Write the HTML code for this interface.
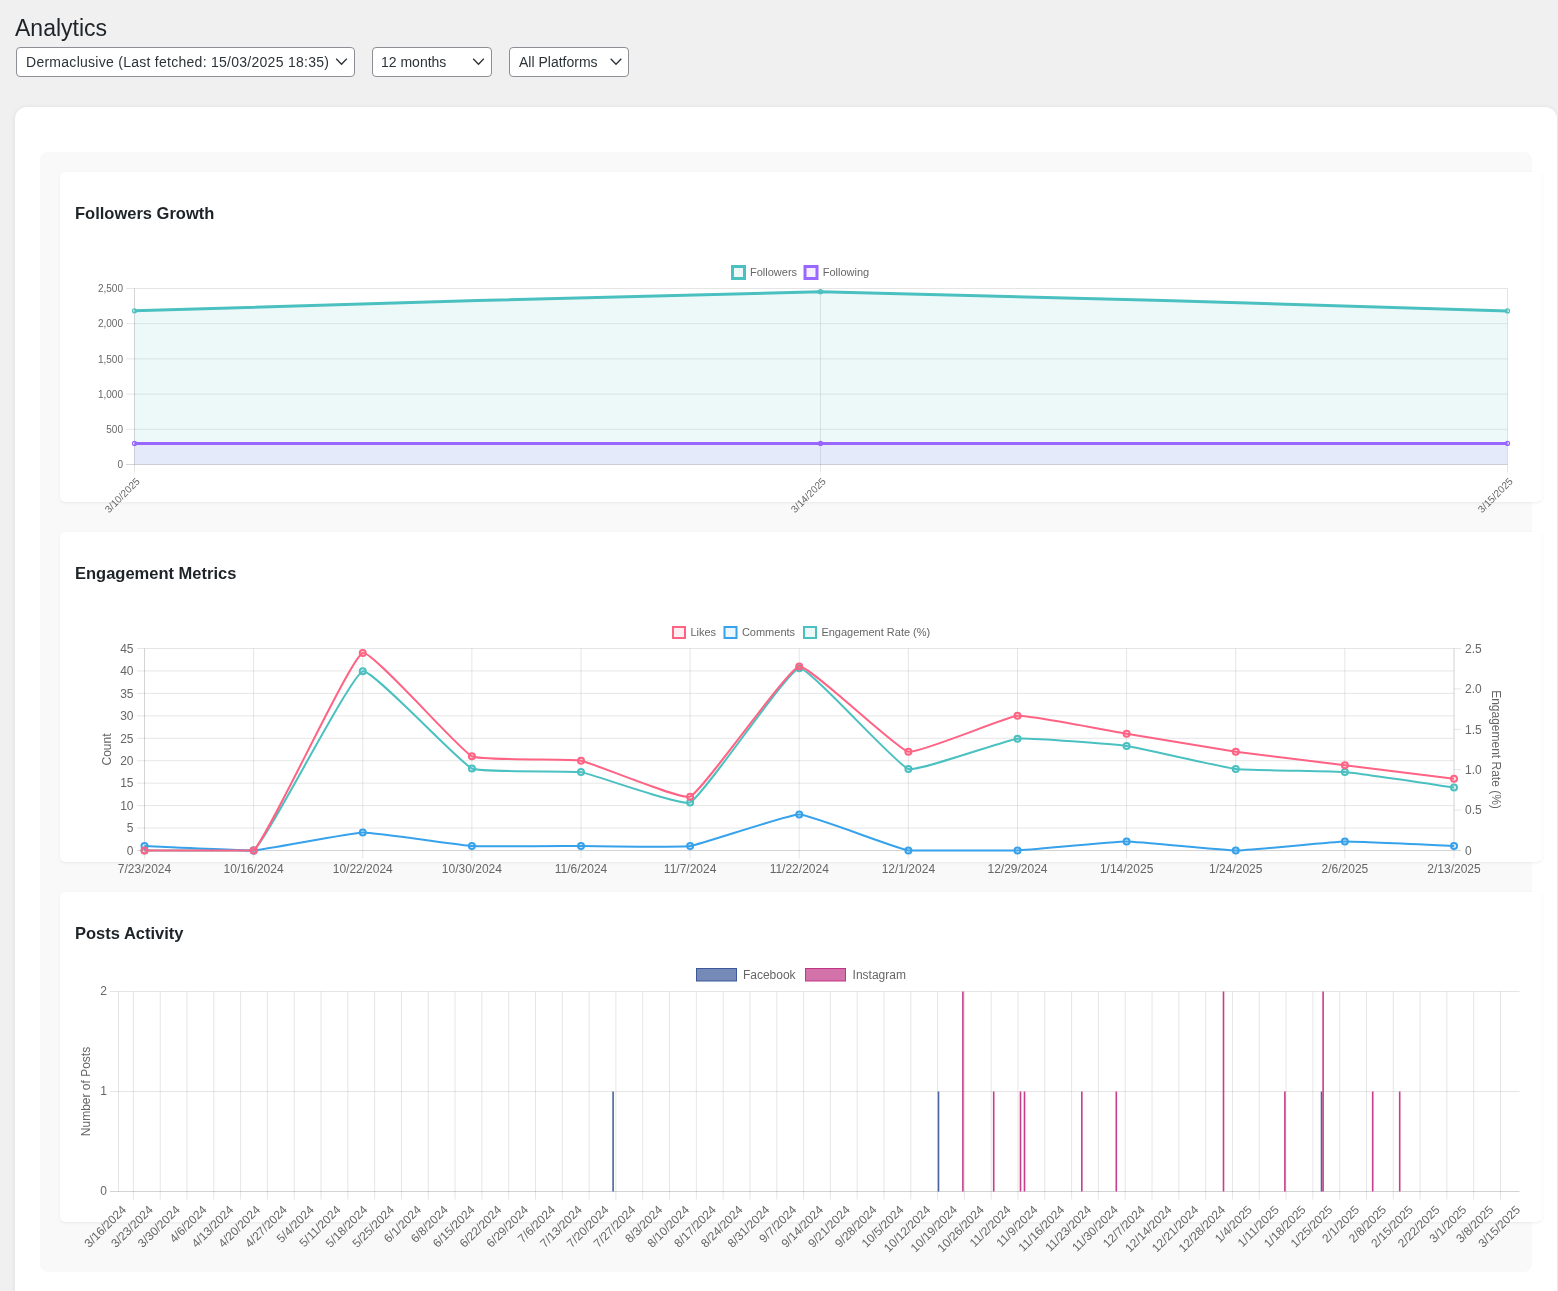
<!DOCTYPE html>
<html><head><meta charset="utf-8"><title>Analytics</title>
<style>
html,body{margin:0;padding:0;}
body{width:1558px;height:1291px;overflow:hidden;background:#f0f0f1;position:relative;font-family:'Liberation Sans', sans-serif;color:#1d2327;}
.abs{position:absolute;}
h1,.sel span,.ct{will-change:transform;}
h1{position:absolute;left:15px;top:13px;margin:0;font-size:23px;font-weight:400;line-height:30px;color:#1d2327;}
.sel{position:absolute;top:47px;height:28px;border:1px solid #8c8f94;border-radius:4px;background:#fff;box-sizing:content-box;font-size:14px;line-height:29px;color:#2c3338;white-space:nowrap;}
.outer{left:15px;top:107px;width:1542px;height:1300px;background:#fff;border-radius:12px;box-shadow:0 0 5px rgba(0,0,0,0.07);}
.panel{left:40px;top:152px;width:1492px;height:1120px;background:#f9f9f9;border-radius:8px;}
.card{left:60px;width:1482px;height:330px;background:#fff;border-radius:5px;box-shadow:0 1px 3px rgba(0,0,0,0.07);}
.ct{position:absolute;left:15px;top:29px;margin:0;font-size:16.5px;font-weight:700;line-height:24px;color:#1d2327;}
svg text{font-family:'Liberation Sans', sans-serif;}
body{-webkit-font-smoothing:antialiased;}
svg{will-change:transform;}
</style></head><body>
<h1>Analytics</h1>
<div class="sel" style="left:16px;width:337px;"><span style="position:absolute;left:8.5px;letter-spacing:0.27px;">Dermaclusive (Last fetched: 15/03/2025 18:35)</span></div>
<div class="sel" style="left:372px;width:118px;"><span style="position:absolute;left:8px;">12 months</span></div>
<div class="sel" style="left:509px;width:118px;"><span style="position:absolute;left:9px;">All Platforms</span></div>
<div class="abs outer"></div>
<div class="abs panel"></div>
<div class="abs card" style="top:172px;"><h2 class="ct">Followers Growth</h2></div>
<div class="abs card" style="top:532px;"><h2 class="ct">Engagement Metrics</h2></div>
<div class="abs card" style="top:892px;"><h2 class="ct">Posts Activity</h2></div>
<svg class="abs" style="left:0;top:0" width="1558" height="1291" viewBox="0 0 1558 1291">
<polyline points="336.2,58.8 341.5,64.3 346.8,58.8" fill="none" stroke="#2c3338" stroke-width="1.3"/><polyline points="473.2,58.8 478.5,64.3 483.8,58.8" fill="none" stroke="#2c3338" stroke-width="1.3"/><polyline points="610.7,58.8 616,64.3 621.3,58.8" fill="none" stroke="#2c3338" stroke-width="1.3"/>
<text x="820.5" y="276" font-size="11" text-anchor="start" fill="#666"></text><line x1="126" y1="464.5" x2="1507.5" y2="464.5" stroke="rgba(0,0,0,0.1)" stroke-width="1"/><text x="123" y="468.1" font-size="10" text-anchor="end" fill="#666">0</text><line x1="126" y1="429.3" x2="1507.5" y2="429.3" stroke="rgba(0,0,0,0.1)" stroke-width="1"/><text x="123" y="432.9" font-size="10" text-anchor="end" fill="#666">500</text><line x1="126" y1="394.1" x2="1507.5" y2="394.1" stroke="rgba(0,0,0,0.1)" stroke-width="1"/><text x="123" y="397.7" font-size="10" text-anchor="end" fill="#666">1,000</text><line x1="126" y1="358.9" x2="1507.5" y2="358.9" stroke="rgba(0,0,0,0.1)" stroke-width="1"/><text x="123" y="362.5" font-size="10" text-anchor="end" fill="#666">1,500</text><line x1="126" y1="323.7" x2="1507.5" y2="323.7" stroke="rgba(0,0,0,0.1)" stroke-width="1"/><text x="123" y="327.3" font-size="10" text-anchor="end" fill="#666">2,000</text><line x1="126" y1="288.5" x2="1507.5" y2="288.5" stroke="rgba(0,0,0,0.1)" stroke-width="1"/><text x="123" y="292.1" font-size="10" text-anchor="end" fill="#666">2,500</text><line x1="134.5" y1="288.5" x2="134.5" y2="472.5" stroke="rgba(0,0,0,0.1)" stroke-width="1"/><line x1="820.5" y1="288.5" x2="820.5" y2="472.5" stroke="rgba(0,0,0,0.1)" stroke-width="1"/><line x1="1507.5" y1="288.5" x2="1507.5" y2="472.5" stroke="rgba(0,0,0,0.1)" stroke-width="1"/><line x1="134.5" y1="288.5" x2="134.5" y2="464.5" stroke="rgba(0,0,0,0.08)" stroke-width="1"/><line x1="126" y1="464.5" x2="1507.5" y2="464.5" stroke="rgba(0,0,0,0.08)" stroke-width="1"/><path d="M134.5 443.4 C203.1 443.4 751.9 443.4 820.5 443.4 C889.2 443.4 1438.8 443.4 1507.5 443.4 L1507.5 464.5 L134.5 464.5 Z" fill="rgba(153,102,255,0.1)"/><path d="M134.5 310.8 C203.1 308.89 751.9 291.7 820.5 291.7 C889.2 291.71 1438.8 308.98 1507.5 310.9 L1507.5 464.5 L134.5 464.5 Z" fill="rgba(75,192,192,0.1)"/><path d="M134.5 443.4 C203.1 443.4 751.9 443.4 820.5 443.4 C889.2 443.4 1438.8 443.4 1507.5 443.4" fill="none" stroke="#9966ff" stroke-width="3"/><path d="M134.5 310.8 C203.1 308.89 751.9 291.7 820.5 291.7 C889.2 291.71 1438.8 308.98 1507.5 310.9" fill="none" stroke="#4bc0c0" stroke-width="3"/><circle cx="134.5" cy="443.4" r="2" fill="rgba(153,102,255,0.1)" stroke="#9966ff" stroke-width="1.2"/><circle cx="820.5" cy="443.4" r="2" fill="rgba(153,102,255,0.1)" stroke="#9966ff" stroke-width="1.2"/><circle cx="1507.5" cy="443.4" r="2" fill="rgba(153,102,255,0.1)" stroke="#9966ff" stroke-width="1.2"/><circle cx="134.5" cy="310.8" r="2" fill="rgba(75,192,192,0.1)" stroke="#4bc0c0" stroke-width="1.2"/><circle cx="820.5" cy="291.7" r="2" fill="rgba(75,192,192,0.1)" stroke="#4bc0c0" stroke-width="1.2"/><circle cx="1507.5" cy="310.9" r="2" fill="rgba(75,192,192,0.1)" stroke="#4bc0c0" stroke-width="1.2"/><rect x="732.5" y="266.5" width="12" height="12" fill="rgba(75,192,192,0.1)" stroke="#4bc0c0" stroke-width="3"/><text x="750" y="276" font-size="11" text-anchor="start" fill="#666">Followers</text><rect x="805" y="266.5" width="12" height="12" fill="rgba(153,102,255,0.1)" stroke="#9966ff" stroke-width="3"/><text x="822.7" y="276" font-size="11" text-anchor="start" fill="#666">Following</text><text x="140.5" y="482" font-size="10" text-anchor="end" fill="#666" transform="rotate(-45 140.5 482)">3/10/2025</text><text x="826.5" y="482" font-size="10" text-anchor="end" fill="#666" transform="rotate(-45 826.5 482)">3/14/2025</text><text x="1513.5" y="482" font-size="10" text-anchor="end" fill="#666" transform="rotate(-45 1513.5 482)">3/15/2025</text><line x1="137" y1="850.5" x2="1454" y2="850.5" stroke="rgba(0,0,0,0.1)" stroke-width="1"/><text x="133.5" y="854.8" font-size="12" text-anchor="end" fill="#666">0</text><line x1="137" y1="828.06" x2="1454" y2="828.06" stroke="rgba(0,0,0,0.1)" stroke-width="1"/><text x="133.5" y="832.36" font-size="12" text-anchor="end" fill="#666">5</text><line x1="137" y1="805.61" x2="1454" y2="805.61" stroke="rgba(0,0,0,0.1)" stroke-width="1"/><text x="133.5" y="809.91" font-size="12" text-anchor="end" fill="#666">10</text><line x1="137" y1="783.17" x2="1454" y2="783.17" stroke="rgba(0,0,0,0.1)" stroke-width="1"/><text x="133.5" y="787.47" font-size="12" text-anchor="end" fill="#666">15</text><line x1="137" y1="760.72" x2="1454" y2="760.72" stroke="rgba(0,0,0,0.1)" stroke-width="1"/><text x="133.5" y="765.02" font-size="12" text-anchor="end" fill="#666">20</text><line x1="137" y1="738.28" x2="1454" y2="738.28" stroke="rgba(0,0,0,0.1)" stroke-width="1"/><text x="133.5" y="742.58" font-size="12" text-anchor="end" fill="#666">25</text><line x1="137" y1="715.83" x2="1454" y2="715.83" stroke="rgba(0,0,0,0.1)" stroke-width="1"/><text x="133.5" y="720.13" font-size="12" text-anchor="end" fill="#666">30</text><line x1="137" y1="693.39" x2="1454" y2="693.39" stroke="rgba(0,0,0,0.1)" stroke-width="1"/><text x="133.5" y="697.69" font-size="12" text-anchor="end" fill="#666">35</text><line x1="137" y1="670.94" x2="1454" y2="670.94" stroke="rgba(0,0,0,0.1)" stroke-width="1"/><text x="133.5" y="675.24" font-size="12" text-anchor="end" fill="#666">40</text><line x1="137" y1="648.5" x2="1454" y2="648.5" stroke="rgba(0,0,0,0.1)" stroke-width="1"/><text x="133.5" y="652.8" font-size="12" text-anchor="end" fill="#666">45</text><line x1="1454" y1="850.5" x2="1461" y2="850.5" stroke="rgba(0,0,0,0.1)" stroke-width="1"/><text x="1465" y="854.8" font-size="12" text-anchor="start" fill="#666">0</text><line x1="1454" y1="810.1" x2="1461" y2="810.1" stroke="rgba(0,0,0,0.1)" stroke-width="1"/><text x="1465" y="814.4" font-size="12" text-anchor="start" fill="#666">0.5</text><line x1="1454" y1="769.7" x2="1461" y2="769.7" stroke="rgba(0,0,0,0.1)" stroke-width="1"/><text x="1465" y="774" font-size="12" text-anchor="start" fill="#666">1.0</text><line x1="1454" y1="729.3" x2="1461" y2="729.3" stroke="rgba(0,0,0,0.1)" stroke-width="1"/><text x="1465" y="733.6" font-size="12" text-anchor="start" fill="#666">1.5</text><line x1="1454" y1="688.9" x2="1461" y2="688.9" stroke="rgba(0,0,0,0.1)" stroke-width="1"/><text x="1465" y="693.2" font-size="12" text-anchor="start" fill="#666">2.0</text><line x1="1454" y1="648.5" x2="1461" y2="648.5" stroke="rgba(0,0,0,0.1)" stroke-width="1"/><text x="1465" y="652.8" font-size="12" text-anchor="start" fill="#666">2.5</text><line x1="144.5" y1="648.5" x2="144.5" y2="858.5" stroke="rgba(0,0,0,0.1)" stroke-width="1"/><text x="144.5" y="873" font-size="12" text-anchor="middle" fill="#666">7/23/2024</text><line x1="253.62" y1="648.5" x2="253.62" y2="858.5" stroke="rgba(0,0,0,0.1)" stroke-width="1"/><text x="253.62" y="873" font-size="12" text-anchor="middle" fill="#666">10/16/2024</text><line x1="362.75" y1="648.5" x2="362.75" y2="858.5" stroke="rgba(0,0,0,0.1)" stroke-width="1"/><text x="362.75" y="873" font-size="12" text-anchor="middle" fill="#666">10/22/2024</text><line x1="471.88" y1="648.5" x2="471.88" y2="858.5" stroke="rgba(0,0,0,0.1)" stroke-width="1"/><text x="471.88" y="873" font-size="12" text-anchor="middle" fill="#666">10/30/2024</text><line x1="581" y1="648.5" x2="581" y2="858.5" stroke="rgba(0,0,0,0.1)" stroke-width="1"/><text x="581" y="873" font-size="12" text-anchor="middle" fill="#666">11/6/2024</text><line x1="690.12" y1="648.5" x2="690.12" y2="858.5" stroke="rgba(0,0,0,0.1)" stroke-width="1"/><text x="690.12" y="873" font-size="12" text-anchor="middle" fill="#666">11/7/2024</text><line x1="799.25" y1="648.5" x2="799.25" y2="858.5" stroke="rgba(0,0,0,0.1)" stroke-width="1"/><text x="799.25" y="873" font-size="12" text-anchor="middle" fill="#666">11/22/2024</text><line x1="908.38" y1="648.5" x2="908.38" y2="858.5" stroke="rgba(0,0,0,0.1)" stroke-width="1"/><text x="908.38" y="873" font-size="12" text-anchor="middle" fill="#666">12/1/2024</text><line x1="1017.5" y1="648.5" x2="1017.5" y2="858.5" stroke="rgba(0,0,0,0.1)" stroke-width="1"/><text x="1017.5" y="873" font-size="12" text-anchor="middle" fill="#666">12/29/2024</text><line x1="1126.62" y1="648.5" x2="1126.62" y2="858.5" stroke="rgba(0,0,0,0.1)" stroke-width="1"/><text x="1126.62" y="873" font-size="12" text-anchor="middle" fill="#666">1/14/2025</text><line x1="1235.75" y1="648.5" x2="1235.75" y2="858.5" stroke="rgba(0,0,0,0.1)" stroke-width="1"/><text x="1235.75" y="873" font-size="12" text-anchor="middle" fill="#666">1/24/2025</text><line x1="1344.88" y1="648.5" x2="1344.88" y2="858.5" stroke="rgba(0,0,0,0.1)" stroke-width="1"/><text x="1344.88" y="873" font-size="12" text-anchor="middle" fill="#666">2/6/2025</text><line x1="1454" y1="648.5" x2="1454" y2="858.5" stroke="rgba(0,0,0,0.1)" stroke-width="1"/><text x="1454" y="873" font-size="12" text-anchor="middle" fill="#666">2/13/2025</text><line x1="144.5" y1="648.5" x2="144.5" y2="850.5" stroke="rgba(0,0,0,0.08)" stroke-width="1"/><line x1="1454" y1="648.5" x2="1454" y2="850.5" stroke="rgba(0,0,0,0.08)" stroke-width="1"/><line x1="137" y1="850.5" x2="1461" y2="850.5" stroke="rgba(0,0,0,0.08)" stroke-width="1"/><path d="M144.5 850.5 C155.41 850.5 246.16 850.5 253.62 850.5 C267.98 838.72 349.88 676.2 362.75 671.37 C371.71 668 459.39 762.72 471.88 768.49 C481.21 772.8 570.29 770.46 581 772.12 C592.11 773.85 681.49 806.53 690.12 802.42 C703.31 796.15 787.51 670.1 799.25 668.3 C809.33 666.75 895.99 764.98 908.38 768.97 C917.82 772.02 1006.4 739.84 1017.5 738.67 C1028.22 737.54 1115.82 744.44 1126.62 745.94 C1137.64 747.47 1224.72 767.65 1235.75 768.97 C1246.55 770.27 1334.01 771.2 1344.88 772.12 C1355.84 773.05 1443.09 785.94 1454 787.48" fill="none" stroke="#4bc0c0" stroke-width="2"/><circle cx="144.5" cy="850.5" r="3" fill="rgba(75,192,192,0.1)" stroke="#4bc0c0" stroke-width="2"/><circle cx="253.62" cy="850.5" r="3" fill="rgba(75,192,192,0.1)" stroke="#4bc0c0" stroke-width="2"/><circle cx="362.75" cy="671.37" r="3" fill="rgba(75,192,192,0.1)" stroke="#4bc0c0" stroke-width="2"/><circle cx="471.88" cy="768.49" r="3" fill="rgba(75,192,192,0.1)" stroke="#4bc0c0" stroke-width="2"/><circle cx="581" cy="772.12" r="3" fill="rgba(75,192,192,0.1)" stroke="#4bc0c0" stroke-width="2"/><circle cx="690.12" cy="802.42" r="3" fill="rgba(75,192,192,0.1)" stroke="#4bc0c0" stroke-width="2"/><circle cx="799.25" cy="668.3" r="3" fill="rgba(75,192,192,0.1)" stroke="#4bc0c0" stroke-width="2"/><circle cx="908.38" cy="768.97" r="3" fill="rgba(75,192,192,0.1)" stroke="#4bc0c0" stroke-width="2"/><circle cx="1017.5" cy="738.67" r="3" fill="rgba(75,192,192,0.1)" stroke="#4bc0c0" stroke-width="2"/><circle cx="1126.62" cy="745.94" r="3" fill="rgba(75,192,192,0.1)" stroke="#4bc0c0" stroke-width="2"/><circle cx="1235.75" cy="768.97" r="3" fill="rgba(75,192,192,0.1)" stroke="#4bc0c0" stroke-width="2"/><circle cx="1344.88" cy="772.12" r="3" fill="rgba(75,192,192,0.1)" stroke="#4bc0c0" stroke-width="2"/><circle cx="1454" cy="787.48" r="3" fill="rgba(75,192,192,0.1)" stroke="#4bc0c0" stroke-width="2"/><path d="M144.5 846.01 C155.41 846.46 242.78 850.5 253.62 850.5 C264.61 849.82 351.81 832.77 362.75 832.54 C373.63 832.32 460.92 845.34 471.88 846.01 C482.75 846.68 570.09 846.01 581 846.01 C591.91 846.01 679.43 847.55 690.12 846.01 C701.25 844.41 788.4 814.37 799.25 814.59 C810.23 814.81 897.18 848.66 908.38 850.5 C919.01 850.5 1006.61 850.5 1017.5 850.5 C1028.43 850.05 1115.71 841.52 1126.62 841.52 C1137.54 841.52 1224.84 850.5 1235.75 850.5 C1246.66 850.5 1333.95 841.75 1344.88 841.52 C1355.77 841.3 1443.09 845.56 1454 846.01" fill="none" stroke="#36a2eb" stroke-width="2"/><circle cx="144.5" cy="846.01" r="3" fill="rgba(54,162,235,0.1)" stroke="#36a2eb" stroke-width="2"/><circle cx="253.62" cy="850.5" r="3" fill="rgba(54,162,235,0.1)" stroke="#36a2eb" stroke-width="2"/><circle cx="362.75" cy="832.54" r="3" fill="rgba(54,162,235,0.1)" stroke="#36a2eb" stroke-width="2"/><circle cx="471.88" cy="846.01" r="3" fill="rgba(54,162,235,0.1)" stroke="#36a2eb" stroke-width="2"/><circle cx="581" cy="846.01" r="3" fill="rgba(54,162,235,0.1)" stroke="#36a2eb" stroke-width="2"/><circle cx="690.12" cy="846.01" r="3" fill="rgba(54,162,235,0.1)" stroke="#36a2eb" stroke-width="2"/><circle cx="799.25" cy="814.59" r="3" fill="rgba(54,162,235,0.1)" stroke="#36a2eb" stroke-width="2"/><circle cx="908.38" cy="850.5" r="3" fill="rgba(54,162,235,0.1)" stroke="#36a2eb" stroke-width="2"/><circle cx="1017.5" cy="850.5" r="3" fill="rgba(54,162,235,0.1)" stroke="#36a2eb" stroke-width="2"/><circle cx="1126.62" cy="841.52" r="3" fill="rgba(54,162,235,0.1)" stroke="#36a2eb" stroke-width="2"/><circle cx="1235.75" cy="850.5" r="3" fill="rgba(54,162,235,0.1)" stroke="#36a2eb" stroke-width="2"/><circle cx="1344.88" cy="841.52" r="3" fill="rgba(54,162,235,0.1)" stroke="#36a2eb" stroke-width="2"/><circle cx="1454" cy="846.01" r="3" fill="rgba(54,162,235,0.1)" stroke="#36a2eb" stroke-width="2"/><path d="M144.5 850.5 C155.41 850.5 246.51 850.5 253.62 850.5 C268.34 837.19 349.65 658.65 362.75 652.99 C371.47 649.22 459.24 750 471.88 756.23 C481.06 760.77 570.36 758.75 581 760.72 C592.19 762.79 681.32 800.44 690.12 796.63 C703.14 791.01 787.23 668.93 799.25 666.46 C809.05 664.44 896.45 749.05 908.38 751.74 C918.27 753.98 1006.38 716.75 1017.5 715.83 C1028.2 714.95 1115.71 731.99 1126.62 733.79 C1137.54 735.58 1224.81 750.17 1235.75 751.74 C1246.63 753.31 1333.96 763.86 1344.88 765.21 C1355.79 766.56 1443.09 777.33 1454 778.68" fill="none" stroke="#ff6384" stroke-width="2"/><circle cx="144.5" cy="850.5" r="3" fill="rgba(255,99,132,0.1)" stroke="#ff6384" stroke-width="2"/><circle cx="253.62" cy="850.5" r="3" fill="rgba(255,99,132,0.1)" stroke="#ff6384" stroke-width="2"/><circle cx="362.75" cy="652.99" r="3" fill="rgba(255,99,132,0.1)" stroke="#ff6384" stroke-width="2"/><circle cx="471.88" cy="756.23" r="3" fill="rgba(255,99,132,0.1)" stroke="#ff6384" stroke-width="2"/><circle cx="581" cy="760.72" r="3" fill="rgba(255,99,132,0.1)" stroke="#ff6384" stroke-width="2"/><circle cx="690.12" cy="796.63" r="3" fill="rgba(255,99,132,0.1)" stroke="#ff6384" stroke-width="2"/><circle cx="799.25" cy="666.46" r="3" fill="rgba(255,99,132,0.1)" stroke="#ff6384" stroke-width="2"/><circle cx="908.38" cy="751.74" r="3" fill="rgba(255,99,132,0.1)" stroke="#ff6384" stroke-width="2"/><circle cx="1017.5" cy="715.83" r="3" fill="rgba(255,99,132,0.1)" stroke="#ff6384" stroke-width="2"/><circle cx="1126.62" cy="733.79" r="3" fill="rgba(255,99,132,0.1)" stroke="#ff6384" stroke-width="2"/><circle cx="1235.75" cy="751.74" r="3" fill="rgba(255,99,132,0.1)" stroke="#ff6384" stroke-width="2"/><circle cx="1344.88" cy="765.21" r="3" fill="rgba(255,99,132,0.1)" stroke="#ff6384" stroke-width="2"/><circle cx="1454" cy="778.68" r="3" fill="rgba(255,99,132,0.1)" stroke="#ff6384" stroke-width="2"/><text x="110.5" y="749.5" font-size="12" text-anchor="middle" fill="#666" transform="rotate(-90 110.5 749.5)">Count</text><text x="1491.5" y="749.5" font-size="12" text-anchor="middle" fill="#666" transform="rotate(90 1491.5 749.5)">Engagement Rate (%)</text><rect x="673" y="627" width="12" height="11" fill="rgba(255,99,132,0.1)" stroke="#ff6384" stroke-width="2"/><text x="690.4" y="636" font-size="11" text-anchor="start" fill="#666">Likes</text><rect x="724.5" y="627" width="12" height="11" fill="rgba(54,162,235,0.1)" stroke="#36a2eb" stroke-width="2"/><text x="741.9" y="636" font-size="11" text-anchor="start" fill="#666">Comments</text><rect x="804" y="627" width="12" height="11" fill="rgba(75,192,192,0.1)" stroke="#4bc0c0" stroke-width="2"/><text x="821.4" y="636" font-size="11" text-anchor="start" fill="#666">Engagement Rate (%)</text><line x1="110" y1="991.5" x2="1519.5" y2="991.5" stroke="rgba(0,0,0,0.1)" stroke-width="1"/><text x="107" y="994.8" font-size="12" text-anchor="end" fill="#666">2</text><line x1="110" y1="1091.5" x2="1519.5" y2="1091.5" stroke="rgba(0,0,0,0.1)" stroke-width="1"/><text x="107" y="1094.8" font-size="12" text-anchor="end" fill="#666">1</text><line x1="110" y1="1191.5" x2="1519.5" y2="1191.5" stroke="rgba(0,0,0,0.1)" stroke-width="1"/><text x="107" y="1194.8" font-size="12" text-anchor="end" fill="#666">0</text><line x1="118.5" y1="991.5" x2="118.5" y2="1191.5" stroke="rgba(0,0,0,0.1)" stroke-width="1"/><line x1="110" y1="1191.5" x2="1519.5" y2="1191.5" stroke="rgba(0,0,0,0.08)" stroke-width="1"/><line x1="133.4" y1="991.5" x2="133.4" y2="1199.5" stroke="rgba(0,0,0,0.1)" stroke-width="1"/><line x1="160.21" y1="991.5" x2="160.21" y2="1199.5" stroke="rgba(0,0,0,0.1)" stroke-width="1"/><line x1="187.01" y1="991.5" x2="187.01" y2="1199.5" stroke="rgba(0,0,0,0.1)" stroke-width="1"/><line x1="213.82" y1="991.5" x2="213.82" y2="1199.5" stroke="rgba(0,0,0,0.1)" stroke-width="1"/><line x1="240.62" y1="991.5" x2="240.62" y2="1199.5" stroke="rgba(0,0,0,0.1)" stroke-width="1"/><line x1="267.43" y1="991.5" x2="267.43" y2="1199.5" stroke="rgba(0,0,0,0.1)" stroke-width="1"/><line x1="294.24" y1="991.5" x2="294.24" y2="1199.5" stroke="rgba(0,0,0,0.1)" stroke-width="1"/><line x1="321.04" y1="991.5" x2="321.04" y2="1199.5" stroke="rgba(0,0,0,0.1)" stroke-width="1"/><line x1="347.85" y1="991.5" x2="347.85" y2="1199.5" stroke="rgba(0,0,0,0.1)" stroke-width="1"/><line x1="374.65" y1="991.5" x2="374.65" y2="1199.5" stroke="rgba(0,0,0,0.1)" stroke-width="1"/><line x1="401.46" y1="991.5" x2="401.46" y2="1199.5" stroke="rgba(0,0,0,0.1)" stroke-width="1"/><line x1="428.27" y1="991.5" x2="428.27" y2="1199.5" stroke="rgba(0,0,0,0.1)" stroke-width="1"/><line x1="455.07" y1="991.5" x2="455.07" y2="1199.5" stroke="rgba(0,0,0,0.1)" stroke-width="1"/><line x1="481.88" y1="991.5" x2="481.88" y2="1199.5" stroke="rgba(0,0,0,0.1)" stroke-width="1"/><line x1="508.68" y1="991.5" x2="508.68" y2="1199.5" stroke="rgba(0,0,0,0.1)" stroke-width="1"/><line x1="535.49" y1="991.5" x2="535.49" y2="1199.5" stroke="rgba(0,0,0,0.1)" stroke-width="1"/><line x1="562.3" y1="991.5" x2="562.3" y2="1199.5" stroke="rgba(0,0,0,0.1)" stroke-width="1"/><line x1="589.1" y1="991.5" x2="589.1" y2="1199.5" stroke="rgba(0,0,0,0.1)" stroke-width="1"/><line x1="615.91" y1="991.5" x2="615.91" y2="1199.5" stroke="rgba(0,0,0,0.1)" stroke-width="1"/><line x1="642.71" y1="991.5" x2="642.71" y2="1199.5" stroke="rgba(0,0,0,0.1)" stroke-width="1"/><line x1="669.52" y1="991.5" x2="669.52" y2="1199.5" stroke="rgba(0,0,0,0.1)" stroke-width="1"/><line x1="696.33" y1="991.5" x2="696.33" y2="1199.5" stroke="rgba(0,0,0,0.1)" stroke-width="1"/><line x1="723.13" y1="991.5" x2="723.13" y2="1199.5" stroke="rgba(0,0,0,0.1)" stroke-width="1"/><line x1="749.94" y1="991.5" x2="749.94" y2="1199.5" stroke="rgba(0,0,0,0.1)" stroke-width="1"/><line x1="776.74" y1="991.5" x2="776.74" y2="1199.5" stroke="rgba(0,0,0,0.1)" stroke-width="1"/><line x1="803.55" y1="991.5" x2="803.55" y2="1199.5" stroke="rgba(0,0,0,0.1)" stroke-width="1"/><line x1="830.36" y1="991.5" x2="830.36" y2="1199.5" stroke="rgba(0,0,0,0.1)" stroke-width="1"/><line x1="857.16" y1="991.5" x2="857.16" y2="1199.5" stroke="rgba(0,0,0,0.1)" stroke-width="1"/><line x1="883.97" y1="991.5" x2="883.97" y2="1199.5" stroke="rgba(0,0,0,0.1)" stroke-width="1"/><line x1="910.77" y1="991.5" x2="910.77" y2="1199.5" stroke="rgba(0,0,0,0.1)" stroke-width="1"/><line x1="937.58" y1="991.5" x2="937.58" y2="1199.5" stroke="rgba(0,0,0,0.1)" stroke-width="1"/><line x1="964.39" y1="991.5" x2="964.39" y2="1199.5" stroke="rgba(0,0,0,0.1)" stroke-width="1"/><line x1="991.19" y1="991.5" x2="991.19" y2="1199.5" stroke="rgba(0,0,0,0.1)" stroke-width="1"/><line x1="1018" y1="991.5" x2="1018" y2="1199.5" stroke="rgba(0,0,0,0.1)" stroke-width="1"/><line x1="1044.8" y1="991.5" x2="1044.8" y2="1199.5" stroke="rgba(0,0,0,0.1)" stroke-width="1"/><line x1="1071.61" y1="991.5" x2="1071.61" y2="1199.5" stroke="rgba(0,0,0,0.1)" stroke-width="1"/><line x1="1098.42" y1="991.5" x2="1098.42" y2="1199.5" stroke="rgba(0,0,0,0.1)" stroke-width="1"/><line x1="1125.22" y1="991.5" x2="1125.22" y2="1199.5" stroke="rgba(0,0,0,0.1)" stroke-width="1"/><line x1="1152.03" y1="991.5" x2="1152.03" y2="1199.5" stroke="rgba(0,0,0,0.1)" stroke-width="1"/><line x1="1178.83" y1="991.5" x2="1178.83" y2="1199.5" stroke="rgba(0,0,0,0.1)" stroke-width="1"/><line x1="1205.64" y1="991.5" x2="1205.64" y2="1199.5" stroke="rgba(0,0,0,0.1)" stroke-width="1"/><line x1="1232.45" y1="991.5" x2="1232.45" y2="1199.5" stroke="rgba(0,0,0,0.1)" stroke-width="1"/><line x1="1259.25" y1="991.5" x2="1259.25" y2="1199.5" stroke="rgba(0,0,0,0.1)" stroke-width="1"/><line x1="1286.06" y1="991.5" x2="1286.06" y2="1199.5" stroke="rgba(0,0,0,0.1)" stroke-width="1"/><line x1="1312.86" y1="991.5" x2="1312.86" y2="1199.5" stroke="rgba(0,0,0,0.1)" stroke-width="1"/><line x1="1339.67" y1="991.5" x2="1339.67" y2="1199.5" stroke="rgba(0,0,0,0.1)" stroke-width="1"/><line x1="1366.48" y1="991.5" x2="1366.48" y2="1199.5" stroke="rgba(0,0,0,0.1)" stroke-width="1"/><line x1="1393.28" y1="991.5" x2="1393.28" y2="1199.5" stroke="rgba(0,0,0,0.1)" stroke-width="1"/><line x1="1420.09" y1="991.5" x2="1420.09" y2="1199.5" stroke="rgba(0,0,0,0.1)" stroke-width="1"/><line x1="1446.89" y1="991.5" x2="1446.89" y2="1199.5" stroke="rgba(0,0,0,0.1)" stroke-width="1"/><line x1="1473.7" y1="991.5" x2="1473.7" y2="1199.5" stroke="rgba(0,0,0,0.1)" stroke-width="1"/><line x1="1500.51" y1="991.5" x2="1500.51" y2="1199.5" stroke="rgba(0,0,0,0.1)" stroke-width="1"/><text x="127" y="1210.5" font-size="12" text-anchor="end" fill="#666" transform="rotate(-45 127 1210.5)">3/16/2024</text><text x="153.81" y="1210.5" font-size="12" text-anchor="end" fill="#666" transform="rotate(-45 153.81 1210.5)">3/23/2024</text><text x="180.61" y="1210.5" font-size="12" text-anchor="end" fill="#666" transform="rotate(-45 180.61 1210.5)">3/30/2024</text><text x="207.42" y="1210.5" font-size="12" text-anchor="end" fill="#666" transform="rotate(-45 207.42 1210.5)">4/6/2024</text><text x="234.22" y="1210.5" font-size="12" text-anchor="end" fill="#666" transform="rotate(-45 234.22 1210.5)">4/13/2024</text><text x="261.03" y="1210.5" font-size="12" text-anchor="end" fill="#666" transform="rotate(-45 261.03 1210.5)">4/20/2024</text><text x="287.84" y="1210.5" font-size="12" text-anchor="end" fill="#666" transform="rotate(-45 287.84 1210.5)">4/27/2024</text><text x="314.64" y="1210.5" font-size="12" text-anchor="end" fill="#666" transform="rotate(-45 314.64 1210.5)">5/4/2024</text><text x="341.45" y="1210.5" font-size="12" text-anchor="end" fill="#666" transform="rotate(-45 341.45 1210.5)">5/11/2024</text><text x="368.25" y="1210.5" font-size="12" text-anchor="end" fill="#666" transform="rotate(-45 368.25 1210.5)">5/18/2024</text><text x="395.06" y="1210.5" font-size="12" text-anchor="end" fill="#666" transform="rotate(-45 395.06 1210.5)">5/25/2024</text><text x="421.87" y="1210.5" font-size="12" text-anchor="end" fill="#666" transform="rotate(-45 421.87 1210.5)">6/1/2024</text><text x="448.67" y="1210.5" font-size="12" text-anchor="end" fill="#666" transform="rotate(-45 448.67 1210.5)">6/8/2024</text><text x="475.48" y="1210.5" font-size="12" text-anchor="end" fill="#666" transform="rotate(-45 475.48 1210.5)">6/15/2024</text><text x="502.28" y="1210.5" font-size="12" text-anchor="end" fill="#666" transform="rotate(-45 502.28 1210.5)">6/22/2024</text><text x="529.09" y="1210.5" font-size="12" text-anchor="end" fill="#666" transform="rotate(-45 529.09 1210.5)">6/29/2024</text><text x="555.9" y="1210.5" font-size="12" text-anchor="end" fill="#666" transform="rotate(-45 555.9 1210.5)">7/6/2024</text><text x="582.7" y="1210.5" font-size="12" text-anchor="end" fill="#666" transform="rotate(-45 582.7 1210.5)">7/13/2024</text><text x="609.51" y="1210.5" font-size="12" text-anchor="end" fill="#666" transform="rotate(-45 609.51 1210.5)">7/20/2024</text><text x="636.31" y="1210.5" font-size="12" text-anchor="end" fill="#666" transform="rotate(-45 636.31 1210.5)">7/27/2024</text><text x="663.12" y="1210.5" font-size="12" text-anchor="end" fill="#666" transform="rotate(-45 663.12 1210.5)">8/3/2024</text><text x="689.93" y="1210.5" font-size="12" text-anchor="end" fill="#666" transform="rotate(-45 689.93 1210.5)">8/10/2024</text><text x="716.73" y="1210.5" font-size="12" text-anchor="end" fill="#666" transform="rotate(-45 716.73 1210.5)">8/17/2024</text><text x="743.54" y="1210.5" font-size="12" text-anchor="end" fill="#666" transform="rotate(-45 743.54 1210.5)">8/24/2024</text><text x="770.34" y="1210.5" font-size="12" text-anchor="end" fill="#666" transform="rotate(-45 770.34 1210.5)">8/31/2024</text><text x="797.15" y="1210.5" font-size="12" text-anchor="end" fill="#666" transform="rotate(-45 797.15 1210.5)">9/7/2024</text><text x="823.96" y="1210.5" font-size="12" text-anchor="end" fill="#666" transform="rotate(-45 823.96 1210.5)">9/14/2024</text><text x="850.76" y="1210.5" font-size="12" text-anchor="end" fill="#666" transform="rotate(-45 850.76 1210.5)">9/21/2024</text><text x="877.57" y="1210.5" font-size="12" text-anchor="end" fill="#666" transform="rotate(-45 877.57 1210.5)">9/28/2024</text><text x="904.37" y="1210.5" font-size="12" text-anchor="end" fill="#666" transform="rotate(-45 904.37 1210.5)">10/5/2024</text><text x="931.18" y="1210.5" font-size="12" text-anchor="end" fill="#666" transform="rotate(-45 931.18 1210.5)">10/12/2024</text><text x="957.99" y="1210.5" font-size="12" text-anchor="end" fill="#666" transform="rotate(-45 957.99 1210.5)">10/19/2024</text><text x="984.79" y="1210.5" font-size="12" text-anchor="end" fill="#666" transform="rotate(-45 984.79 1210.5)">10/26/2024</text><text x="1011.6" y="1210.5" font-size="12" text-anchor="end" fill="#666" transform="rotate(-45 1011.6 1210.5)">11/2/2024</text><text x="1038.4" y="1210.5" font-size="12" text-anchor="end" fill="#666" transform="rotate(-45 1038.4 1210.5)">11/9/2024</text><text x="1065.21" y="1210.5" font-size="12" text-anchor="end" fill="#666" transform="rotate(-45 1065.21 1210.5)">11/16/2024</text><text x="1092.02" y="1210.5" font-size="12" text-anchor="end" fill="#666" transform="rotate(-45 1092.02 1210.5)">11/23/2024</text><text x="1118.82" y="1210.5" font-size="12" text-anchor="end" fill="#666" transform="rotate(-45 1118.82 1210.5)">11/30/2024</text><text x="1145.63" y="1210.5" font-size="12" text-anchor="end" fill="#666" transform="rotate(-45 1145.63 1210.5)">12/7/2024</text><text x="1172.43" y="1210.5" font-size="12" text-anchor="end" fill="#666" transform="rotate(-45 1172.43 1210.5)">12/14/2024</text><text x="1199.24" y="1210.5" font-size="12" text-anchor="end" fill="#666" transform="rotate(-45 1199.24 1210.5)">12/21/2024</text><text x="1226.05" y="1210.5" font-size="12" text-anchor="end" fill="#666" transform="rotate(-45 1226.05 1210.5)">12/28/2024</text><text x="1252.85" y="1210.5" font-size="12" text-anchor="end" fill="#666" transform="rotate(-45 1252.85 1210.5)">1/4/2025</text><text x="1279.66" y="1210.5" font-size="12" text-anchor="end" fill="#666" transform="rotate(-45 1279.66 1210.5)">1/11/2025</text><text x="1306.46" y="1210.5" font-size="12" text-anchor="end" fill="#666" transform="rotate(-45 1306.46 1210.5)">1/18/2025</text><text x="1333.27" y="1210.5" font-size="12" text-anchor="end" fill="#666" transform="rotate(-45 1333.27 1210.5)">1/25/2025</text><text x="1360.08" y="1210.5" font-size="12" text-anchor="end" fill="#666" transform="rotate(-45 1360.08 1210.5)">2/1/2025</text><text x="1386.88" y="1210.5" font-size="12" text-anchor="end" fill="#666" transform="rotate(-45 1386.88 1210.5)">2/8/2025</text><text x="1413.69" y="1210.5" font-size="12" text-anchor="end" fill="#666" transform="rotate(-45 1413.69 1210.5)">2/15/2025</text><text x="1440.49" y="1210.5" font-size="12" text-anchor="end" fill="#666" transform="rotate(-45 1440.49 1210.5)">2/22/2025</text><text x="1467.3" y="1210.5" font-size="12" text-anchor="end" fill="#666" transform="rotate(-45 1467.3 1210.5)">3/1/2025</text><text x="1494.11" y="1210.5" font-size="12" text-anchor="end" fill="#666" transform="rotate(-45 1494.11 1210.5)">3/8/2025</text><text x="1520.91" y="1210.5" font-size="12" text-anchor="end" fill="#666" transform="rotate(-45 1520.91 1210.5)">3/15/2025</text><text x="90" y="1091.5" font-size="12" text-anchor="middle" fill="#666" transform="rotate(-90 90 1091.5)">Number of Posts</text><rect x="612.3" y="1091.5" width="1.6" height="100" fill="#4a64a0"/><rect x="937.7" y="1091.5" width="1.6" height="100" fill="#4a64a0"/><rect x="1320.7" y="1091.5" width="1.6" height="100" fill="#4a64a0"/><rect x="962.1" y="991.5" width="1.6" height="200" fill="#c83d8c"/><rect x="992.9" y="1091.5" width="1.6" height="100" fill="#c83d8c"/><rect x="1019.7" y="1091.5" width="1.6" height="100" fill="#c83d8c"/><rect x="1023.7" y="1091.5" width="1.6" height="100" fill="#c83d8c"/><rect x="1081" y="1091.5" width="1.6" height="100" fill="#c83d8c"/><rect x="1115.5" y="1091.5" width="1.6" height="100" fill="#c83d8c"/><rect x="1222.7" y="991.5" width="1.6" height="200" fill="#c83d8c"/><rect x="1284.1" y="1091.5" width="1.6" height="100" fill="#c83d8c"/><rect x="1322.3" y="991.5" width="1.6" height="200" fill="#c83d8c"/><rect x="1371.9" y="1091.5" width="1.6" height="100" fill="#c83d8c"/><rect x="1398.9" y="1091.5" width="1.6" height="100" fill="#c83d8c"/><rect x="696.5" y="968.5" width="40" height="12.5" fill="rgba(59,89,152,0.7)" stroke="#3b5998" stroke-width="1"/><text x="742.9" y="978.8" font-size="12" text-anchor="start" fill="#666">Facebook</text><rect x="805.5" y="968.5" width="40" height="12.5" fill="rgba(193,53,132,0.7)" stroke="#c13584" stroke-width="1"/><text x="852.6" y="978.8" font-size="12" text-anchor="start" fill="#666">Instagram</text>
</svg>
</body></html>
